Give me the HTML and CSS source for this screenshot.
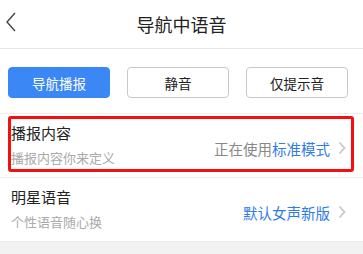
FILE: index.html
```html
<!DOCTYPE html>
<html lang="zh-CN">
<head>
  <meta charset="UTF-8">
  <meta name="viewport" content="width=device-width, initial-scale=1.0">
  <title>导航中语音</title>
  <link rel="stylesheet" href="styles.css">
</head>
<body>
  <header class="topbar">
    <svg class="back" width="12" height="20" viewBox="0 0 12 20"><path d="M10 1 L2 10 L10 19" fill="none" stroke="#444" stroke-width="1.4"/></svg>
    <h1>导航中语音</h1>
  </header>

  <div class="modes">
    <button class="mode active">导航播报</button>
    <button class="mode">静音</button>
    <button class="mode">仅提示音</button>
  </div>

  <div class="row">
    <div class="mark"></div>
    <div class="info">
      <div class="name">播报内容</div>
      <div class="desc">播报内容你来定义</div>
    </div>
    <div class="value">正在使用<span class="blue">标准模式</span></div>
    <svg class="arrow" width="8" height="14" viewBox="0 0 8 14"><path d="M1.5 1.5 L6.5 7 L1.5 12.5" fill="none" stroke="#c8c8c8" stroke-width="1.8"/></svg>
  </div>

  <div class="row">
    <div class="info">
      <div class="name">明星语音</div>
      <div class="desc">个性语音随心换</div>
    </div>
    <div class="value"><span class="blue">默认女声新版</span></div>
    <svg class="arrow" width="8" height="14" viewBox="0 0 8 14"><path d="M1.5 1.5 L6.5 7 L1.5 12.5" fill="none" stroke="#c8c8c8" stroke-width="1.8"/></svg>
  </div>

  <div class="rest"></div>
</body>
</html>
```

FILE: styles.css
```css
body { margin: 0; background: #fff; font-family: "Noto Sans CJK SC", "Noto Sans", sans-serif; color: #222; }
.topbar { height: 48px; border-bottom: 1px solid #e6e6e6; display: flex; align-items: center; justify-content: center; position: relative; }
.topbar h1 { margin: 0; font-size: 18px; font-weight: 400; color: #222; }
.back { position: absolute; left: 5px; top: 12px; }
.modes { display: flex; gap: 17px; padding: 18px 15px 15px 8px; border-bottom: 1px solid #ededed; }
.mode { width: 102px; height: 31px; border: 1px solid #c9c9c9; border-radius: 4px; background: #fff; font-family: inherit; font-size: 13.5px; color: #222; padding: 0; }
.mode.active { background: #3a87f5; border-color: #3a87f5; color: #fff; }
.row { position: relative; height: 63px; display: flex; align-items: center; padding: 0 17px 0 11px; border-bottom: 1px solid #ededed; }
.info { flex: 1; }
.name { font-size: 15px; line-height: 20px; color: #222; margin-top: -1px; }
.desc { font-size: 13px; line-height: 18px; color: #aaa; margin-top: 6px; }
.value { font-size: 14.5px; color: #888; margin-right: 8px; margin-top: 5px; }
.blue { color: #2f7ce6; }
.arrow { margin-top: 5px; }
.mark { position: absolute; left: 8px; right: 9px; top: 2px; bottom: 5px; border: 3px solid #f50f0f; border-radius: 3px; }
.rest { height: 20px; background: #f2f2f2; }
```
